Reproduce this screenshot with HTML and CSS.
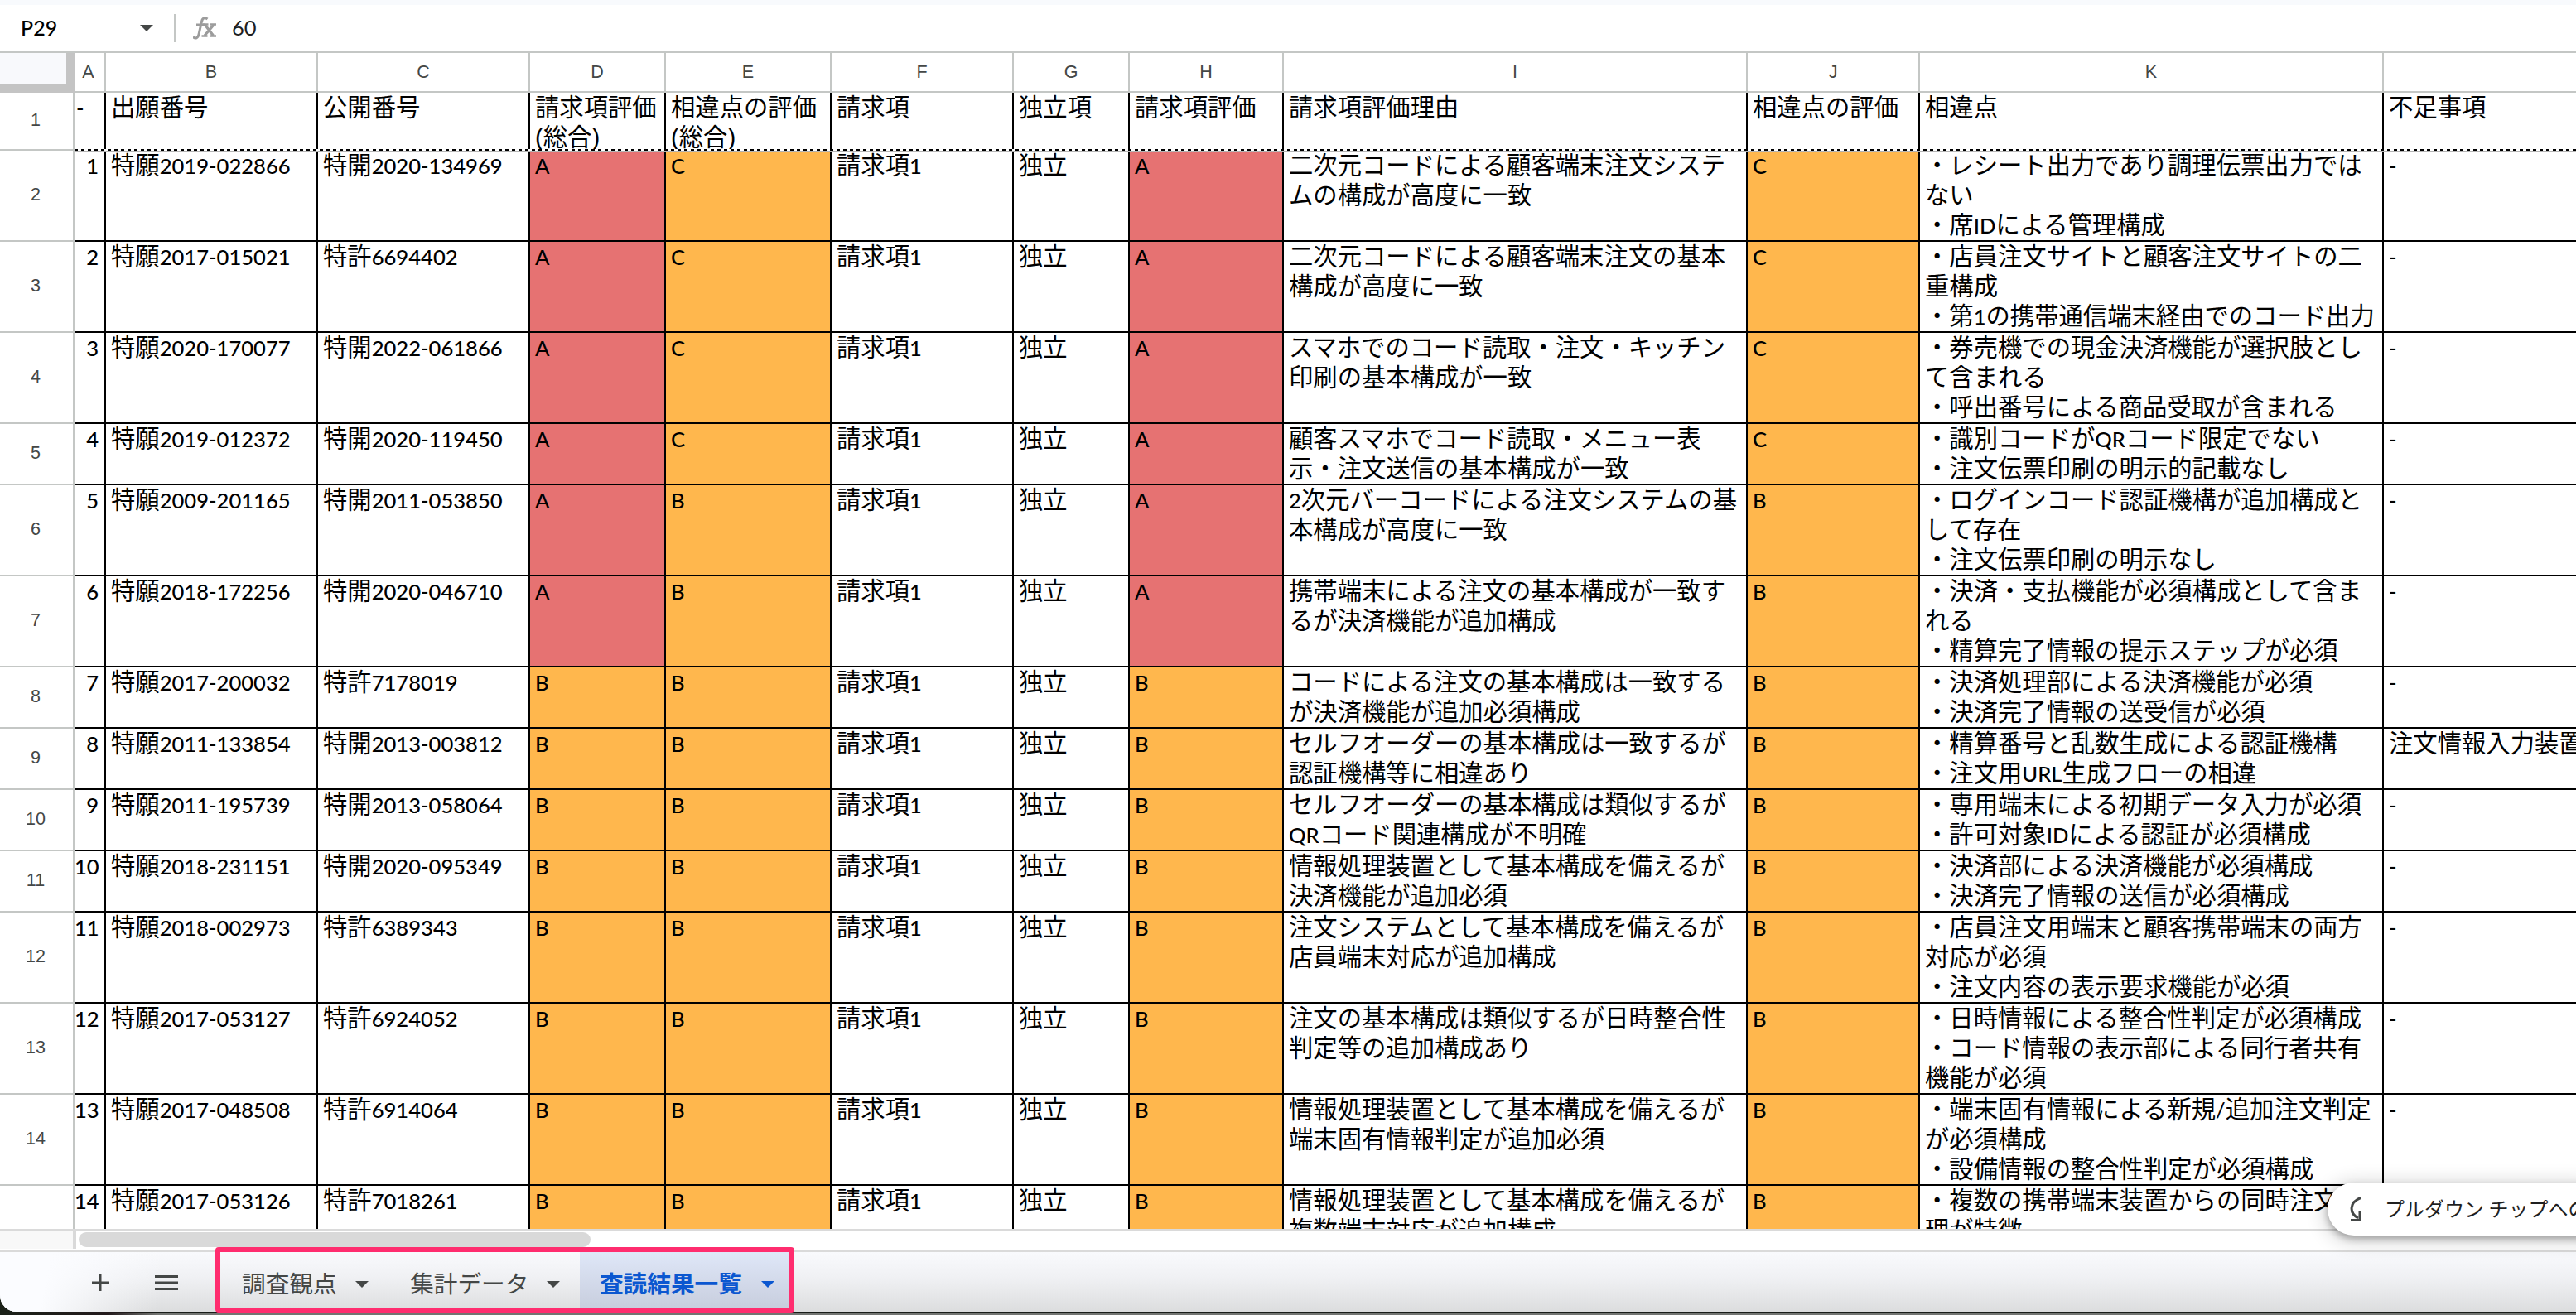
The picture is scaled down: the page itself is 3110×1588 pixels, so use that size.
FILE: index.html
```html
<!DOCTYPE html>
<html lang="ja">
<head>
<meta charset="utf-8">
<title>査読結果一覧</title>
<link rel="stylesheet" href="styles.css">
</head>
<body>
<div class="app">
  <header class="formula-bar">
    <div class="name-box"><span>P29</span><svg class="caret" viewBox="0 0 16 8"><path d="M0 0h16l-8 8z"/></svg></div>
    <svg class="fx" viewBox="0 0 28 28" fill="none" stroke="#9c9c9c" stroke-width="3"><path d="M0 24.5c3 3 6 1.500 7-3L10.500 6c1-4.500 4-5.500 7-3"/><path d="M4 10h10"/><path d="M14.500 10l10 13M25 10L14 23" stroke-width="3.200"/><path d="M11.500 9.500h7M21 9.500h7M10.500 23.500h7M20.500 23.500h7.500" stroke-width="2.600"/></svg>
    <span class="formula">60</span>
  </header>

  <main class="sheet">
    <div class="row head"><div class="corner"></div><div class="narrow">A</div><div>B</div><div>C</div><div>D</div><div>E</div><div>F</div><div>G</div><div>H</div><div>I</div><div>J</div><div>K</div><div></div></div>

    <div class="row frozen"><div class="num">1</div><div class="lat tight">-</div><div>出願番号</div><div>公開番号</div><div>請求項評価<br>(総合)</div><div>相違点の評価<br>(総合)</div><div>請求項</div><div>独立項</div><div>請求項評価</div><div>請求項評価理由</div><div>相違点の評価</div><div>相違点</div><div>不足事項</div></div>

    <div class="row tall"><div class="num">2</div><div class="lat idx">1</div><div>特願<i>2019-022866</i></div><div>特開<i>2020-134969</i></div><div class="lat red">A</div><div class="lat amber">C</div><div>請求項<i>1</i></div><div>独立</div><div class="lat red">A</div><div>二次元コードによる顧客端末注文システ<br>ムの構成が高度に一致</div><div class="lat amber">C</div><div>・レシート出力であり調理伝票出力では<br>ない<br>・席<i>ID</i>による管理構成</div><div class="lat">-</div></div>

    <div class="row tall"><div class="num">3</div><div class="lat idx">2</div><div>特願<i>2017-015021</i></div><div>特許<i>6694402</i></div><div class="lat red">A</div><div class="lat amber">C</div><div>請求項<i>1</i></div><div>独立</div><div class="lat red">A</div><div>二次元コードによる顧客端末注文の基本<br>構成が高度に一致</div><div class="lat amber">C</div><div>・店員注文サイトと顧客注文サイトの二<br>重構成<br>・第<i>1</i>の携帯通信端末経由でのコード出力</div><div class="lat">-</div></div>

    <div class="row tall"><div class="num">4</div><div class="lat idx">3</div><div>特願<i>2020-170077</i></div><div>特開<i>2022-061866</i></div><div class="lat red">A</div><div class="lat amber">C</div><div>請求項<i>1</i></div><div>独立</div><div class="lat red">A</div><div>スマホでのコード読取・注文・キッチン<br>印刷の基本構成が一致</div><div class="lat amber">C</div><div>・券売機での現金決済機能が選択肢とし<br>て含まれる<br>・呼出番号による商品受取が含まれる</div><div class="lat">-</div></div>

    <div class="row"><div class="num">5</div><div class="lat idx">4</div><div>特願<i>2019-012372</i></div><div>特開<i>2020-119450</i></div><div class="lat red">A</div><div class="lat amber">C</div><div>請求項<i>1</i></div><div>独立</div><div class="lat red">A</div><div>顧客スマホでコード読取・メニュー表<br>示・注文送信の基本構成が一致</div><div class="lat amber">C</div><div>・識別コードが<i>QR</i>コード限定でない<br>・注文伝票印刷の明示的記載なし</div><div class="lat">-</div></div>

    <div class="row tall"><div class="num">6</div><div class="lat idx">5</div><div>特願<i>2009-201165</i></div><div>特開<i>2011-053850</i></div><div class="lat red">A</div><div class="lat amber">B</div><div>請求項<i>1</i></div><div>独立</div><div class="lat red">A</div><div><i>2</i>次元バーコードによる注文システムの基<br>本構成が高度に一致</div><div class="lat amber">B</div><div>・ログインコード認証機構が追加構成と<br>して存在<br>・注文伝票印刷の明示なし</div><div class="lat">-</div></div>

    <div class="row tall"><div class="num">7</div><div class="lat idx">6</div><div>特願<i>2018-172256</i></div><div>特開<i>2020-046710</i></div><div class="lat red">A</div><div class="lat amber">B</div><div>請求項<i>1</i></div><div>独立</div><div class="lat red">A</div><div>携帯端末による注文の基本構成が一致す<br>るが決済機能が追加構成</div><div class="lat amber">B</div><div>・決済・支払機能が必須構成として含ま<br>れる<br>・精算完了情報の提示ステップが必須</div><div class="lat">-</div></div>

    <div class="row"><div class="num">8</div><div class="lat idx">7</div><div>特願<i>2017-200032</i></div><div>特許<i>7178019</i></div><div class="lat amber">B</div><div class="lat amber">B</div><div>請求項<i>1</i></div><div>独立</div><div class="lat amber">B</div><div>コードによる注文の基本構成は一致する<br>が決済機能が追加必須構成</div><div class="lat amber">B</div><div>・決済処理部による決済機能が必須<br>・決済完了情報の送受信が必須</div><div class="lat">-</div></div>

    <div class="row"><div class="num">9</div><div class="lat idx">8</div><div>特願<i>2011-133854</i></div><div>特開<i>2013-003812</i></div><div class="lat amber">B</div><div class="lat amber">B</div><div>請求項<i>1</i></div><div>独立</div><div class="lat amber">B</div><div>セルフオーダーの基本構成は一致するが<br>認証機構等に相違あり</div><div class="lat amber">B</div><div>・精算番号と乱数生成による認証機構<br>・注文用<i>URL</i>生成フローの相違</div><div>注文情報入力装置</div></div>

    <div class="row"><div class="num">10</div><div class="lat idx">9</div><div>特願<i>2011-195739</i></div><div>特開<i>2013-058064</i></div><div class="lat amber">B</div><div class="lat amber">B</div><div>請求項<i>1</i></div><div>独立</div><div class="lat amber">B</div><div>セルフオーダーの基本構成は類似するが<br><i>QR</i>コード関連構成が不明確</div><div class="lat amber">B</div><div>・専用端末による初期データ入力が必須<br>・許可対象<i>ID</i>による認証が必須構成</div><div class="lat">-</div></div>

    <div class="row"><div class="num">11</div><div class="lat idx">10</div><div>特願<i>2018-231151</i></div><div>特開<i>2020-095349</i></div><div class="lat amber">B</div><div class="lat amber">B</div><div>請求項<i>1</i></div><div>独立</div><div class="lat amber">B</div><div>情報処理装置として基本構成を備えるが<br>決済機能が追加必須</div><div class="lat amber">B</div><div>・決済部による決済機能が必須構成<br>・決済完了情報の送信が必須構成</div><div class="lat">-</div></div>

    <div class="row tall"><div class="num">12</div><div class="lat idx">11</div><div>特願<i>2018-002973</i></div><div>特許<i>6389343</i></div><div class="lat amber">B</div><div class="lat amber">B</div><div>請求項<i>1</i></div><div>独立</div><div class="lat amber">B</div><div>注文システムとして基本構成を備えるが<br>店員端末対応が追加構成</div><div class="lat amber">B</div><div>・店員注文用端末と顧客携帯端末の両方<br>対応が必須<br>・注文内容の表示要求機能が必須</div><div class="lat">-</div></div>

    <div class="row tall"><div class="num">13</div><div class="lat idx">12</div><div>特願<i>2017-053127</i></div><div>特許<i>6924052</i></div><div class="lat amber">B</div><div class="lat amber">B</div><div>請求項<i>1</i></div><div>独立</div><div class="lat amber">B</div><div>注文の基本構成は類似するが日時整合性<br>判定等の追加構成あり</div><div class="lat amber">B</div><div>・日時情報による整合性判定が必須構成<br>・コード情報の表示部による同行者共有<br>機能が必須</div><div class="lat">-</div></div>

    <div class="row tall"><div class="num">14</div><div class="lat idx">13</div><div>特願<i>2017-048508</i></div><div>特許<i>6914064</i></div><div class="lat amber">B</div><div class="lat amber">B</div><div>請求項<i>1</i></div><div>独立</div><div class="lat amber">B</div><div>情報処理装置として基本構成を備えるが<br>端末固有情報判定が追加必須</div><div class="lat amber">B</div><div>・端末固有情報による新規<i>/</i>追加注文判定<br>が必須構成<br>・設備情報の整合性判定が必須構成</div><div class="lat">-</div></div>

    <div class="row tall"><div class="num"></div><div class="lat idx">14</div><div>特願<i>2017-053126</i></div><div>特許<i>7018261</i></div><div class="lat amber">B</div><div class="lat amber">B</div><div>請求項<i>1</i></div><div>独立</div><div class="lat amber">B</div><div>情報処理装置として基本構成を備えるが<br>複数端末対応が追加構成</div><div class="lat amber">B</div><div>・複数の携帯端末装置からの同時注文処<br>理が特徴</div><div></div></div>
  </main>

  <div class="scroll"><div class="scroll-gutter"></div><div class="thumb"></div></div>

  <footer class="tabs">
    <svg class="plus" viewBox="0 0 20 20"><path d="M10 0v20M0 10h20"/></svg>
    <svg class="menu" viewBox="0 0 28 18"><path d="M0 1.500h28M0 9h28M0 16.500h28"/></svg>
    <div class="tab">調査観点<svg class="caret" viewBox="0 0 16 8"><path d="M0 0h16l-8 8z"/></svg></div>
    <div class="tab">集計データ<svg class="caret" viewBox="0 0 16 8"><path d="M0 0h16l-8 8z"/></svg></div>
    <div class="tab active">査読結果一覧<svg class="caret" viewBox="0 0 16 8"><path d="M0 0h16l-8 8z"/></svg></div>
  </footer>
</div>
<div class="highlight"></div>
<div class="toast"><svg viewBox="0 0 14 30" fill="none" stroke="#444746" stroke-width="3"><path d="M13 1.500C-1 7-1 20 10 26"/><path d="M1 28.500h11V17.500"/></svg><span>プルダウン チップへの</span></div>
</body>
</html>
```

FILE: styles.css
```css
* { box-sizing: border-box; }

body {
  margin: 0;
  width: 3110px;
  height: 1588px;
  overflow: hidden;
  position: relative;
  background: linear-gradient(90deg, #1b2118 0, #231a1c 130px, transparent 190px), linear-gradient(#181c18 0 1586px, #737572 1586px);
  color: #000;
  font-family: "Liberation Sans", "Noto Sans CJK JP", sans-serif;
}

.app {
  height: 1584px;
  display: flex;
  flex-direction: column;
  border-top: 6px solid #f8fafd;
  border-bottom-left-radius: 20px;
  background: #fff;
  overflow: hidden;
}

/* formula bar */
.formula-bar {
  flex: none;
  height: 58px;
  display: flex;
  align-items: center;
  border-bottom: 2px solid #c4c7c5;
  padding-bottom: 1px;
  font: 25.5px/34px Lato, sans-serif;
}
.name-box {
  width: 212px;
  height: 34px;
  display: flex;
  align-items: center;
  justify-content: space-between;
  padding: 0 25px 2px 25px;
  border-right: 2px solid #c4c7c5;
  font-size: 25px;
  font-weight: 500;
}
.formula { margin: -2px 0 0 19px; color: #1f1f1f; }
.caret { width: 16px; height: 8px; fill: #444746; }
.name-box .caret { margin-top: 2px; }
.fx { width: 28px; height: 28px; margin-left: 21px; }

/* grid */
.sheet {
  flex: none;
  height: 1420px;
  overflow: hidden;
}
.row {
  display: grid;
  grid-template-columns: 90px 38px 256px 256px 164px 200px 220px 140px 186px 560px 208px 560px 232px;
  height: 74px;
}
.row.tall { height: 110px; }
.row > div {
  padding: 0 0 0 6px;
  border-right: 2px solid #000;
  border-bottom: 2px solid #000;
  font-size: 29.33px;
  line-height: 36px;
  white-space: nowrap;
  overflow: hidden;
}
.row > div:last-child { border-right: 0; }
.row i {
  font: 25.6px/1 Lato, sans-serif;
  font-weight: 500;
}
.row > .lat {
  font-family: Lato, sans-serif;
  font-size: 25.6px;
  font-weight: 500;
}
.row > .tight { padding-left: 2px; }
.row > .idx { padding: 0 7px 0 0; text-align: right; }
.row > .red { background: #e67272; }
.row > .amber { background: #ffb74d; }
.row > .num {
  display: flex;
  align-items: center;
  justify-content: center;
  padding: 0 2px 2px 0;
  border-color: #c4c7c5;
  color: #444746;
  font-size: 21.5px;
}

.row.head { height: 48px; }
.row.head > div {
  padding: 0;
  border-color: #c4c7c5;
  color: #444746;
  font-size: 21.5px;
  line-height: 46px;
  text-align: center;
}
.row.head > .narrow { padding-right: 3px; }
.row.head > .corner {
  border-right: 10px solid #c4c4c4;
  border-bottom: 10px solid #c4c4c4;
  background: #f8f9fc;
}

.row.frozen { height: 70px; position: relative; }
.row.frozen > div { border-bottom: 0; }
.row.frozen > .num { border-bottom: 2px solid #c4c7c5; }
.row.frozen::after {
  content: "";
  position: absolute;
  left: 90px;
  right: 0;
  top: 68px;
  height: 3px;
  background:
    repeating-linear-gradient(90deg, #000 0 4px, #fff 4px 8px) 0 0 / 100% 2px no-repeat,
    #b4b4b4;
}

/* horizontal scrollbar */
.scroll {
  flex: none;
  height: 28px;
  display: flex;
  border-top: 2px solid #dadada;
  border-bottom: 2px solid #dadada;
}
.scroll-gutter {
  width: 92px;
  height: 22px;
  border-right: 4px solid #d9d9d9;
  background: #f8f8f8;
}
.thumb {
  width: 618px;
  height: 18px;
  margin: 2px 0 0 3px;
  border-radius: 9px;
  background: #d9d9d9;
}

/* sheet tabs */
.tabs {
  flex: none;
  height: 72px;
  display: flex;
  align-items: stretch;
  background:
    linear-gradient(100deg, #fbfcff 60px, rgba(251, 252, 255, 0) 200px),
    linear-gradient(#f9fafd, #eff0f3 45%, #dcddde);
  font: 28.67px/60px "Noto Sans CJK JP", sans-serif;
  color: #444746;
}
.tabs .plus,
.tabs .menu {
  align-self: center;
  margin-top: 2px;
  fill: none;
  stroke: #444746;
  stroke-width: 3;
}
.plus { width: 20px; height: 20px; margin-left: 111px; }
.menu { width: 28px; height: 18px; margin: 0 50px 0 56px; }
.tab {
  display: flex;
  align-items: center;
  gap: 22px;
  padding: 2px 23.5px 0 27px;
}
.tab .caret { margin-top: 4px; }
.tab.active {
  gap: 23px;
  height: 67px;
  padding: 7px 20px 0 24px;
  background: linear-gradient(#dfe7f8, #c8cede);
  color: #0b57d0;
  font-weight: 700;
}
.tab.active .caret { fill: #0b57d0; }

/* marker box drawn over the tabs */
.highlight {
  position: absolute;
  left: 260px;
  top: 1506px;
  width: 699px;
  height: 79px;
  border: 6px solid #ff2d6f;
  border-radius: 4px;
}

.toast {
  position: absolute;
  left: 2810px;
  top: 1428px;
  width: 340px;
  height: 64px;
  display: flex;
  align-items: center;
  gap: 28px;
  padding: 0 0 2px 27px;
  border-radius: 32px;
  background: #fff;
  box-shadow: 0 4px 8px rgba(0, 0, 0, .3), 0 4px 22px 6px rgba(0, 0, 0, .14);
  color: #1f1f1f;
  font: 24px/36px "Noto Sans CJK JP", sans-serif;
  white-space: nowrap;
}
.toast svg { width: 14px; height: 30px; margin-top: 2px; }
```
